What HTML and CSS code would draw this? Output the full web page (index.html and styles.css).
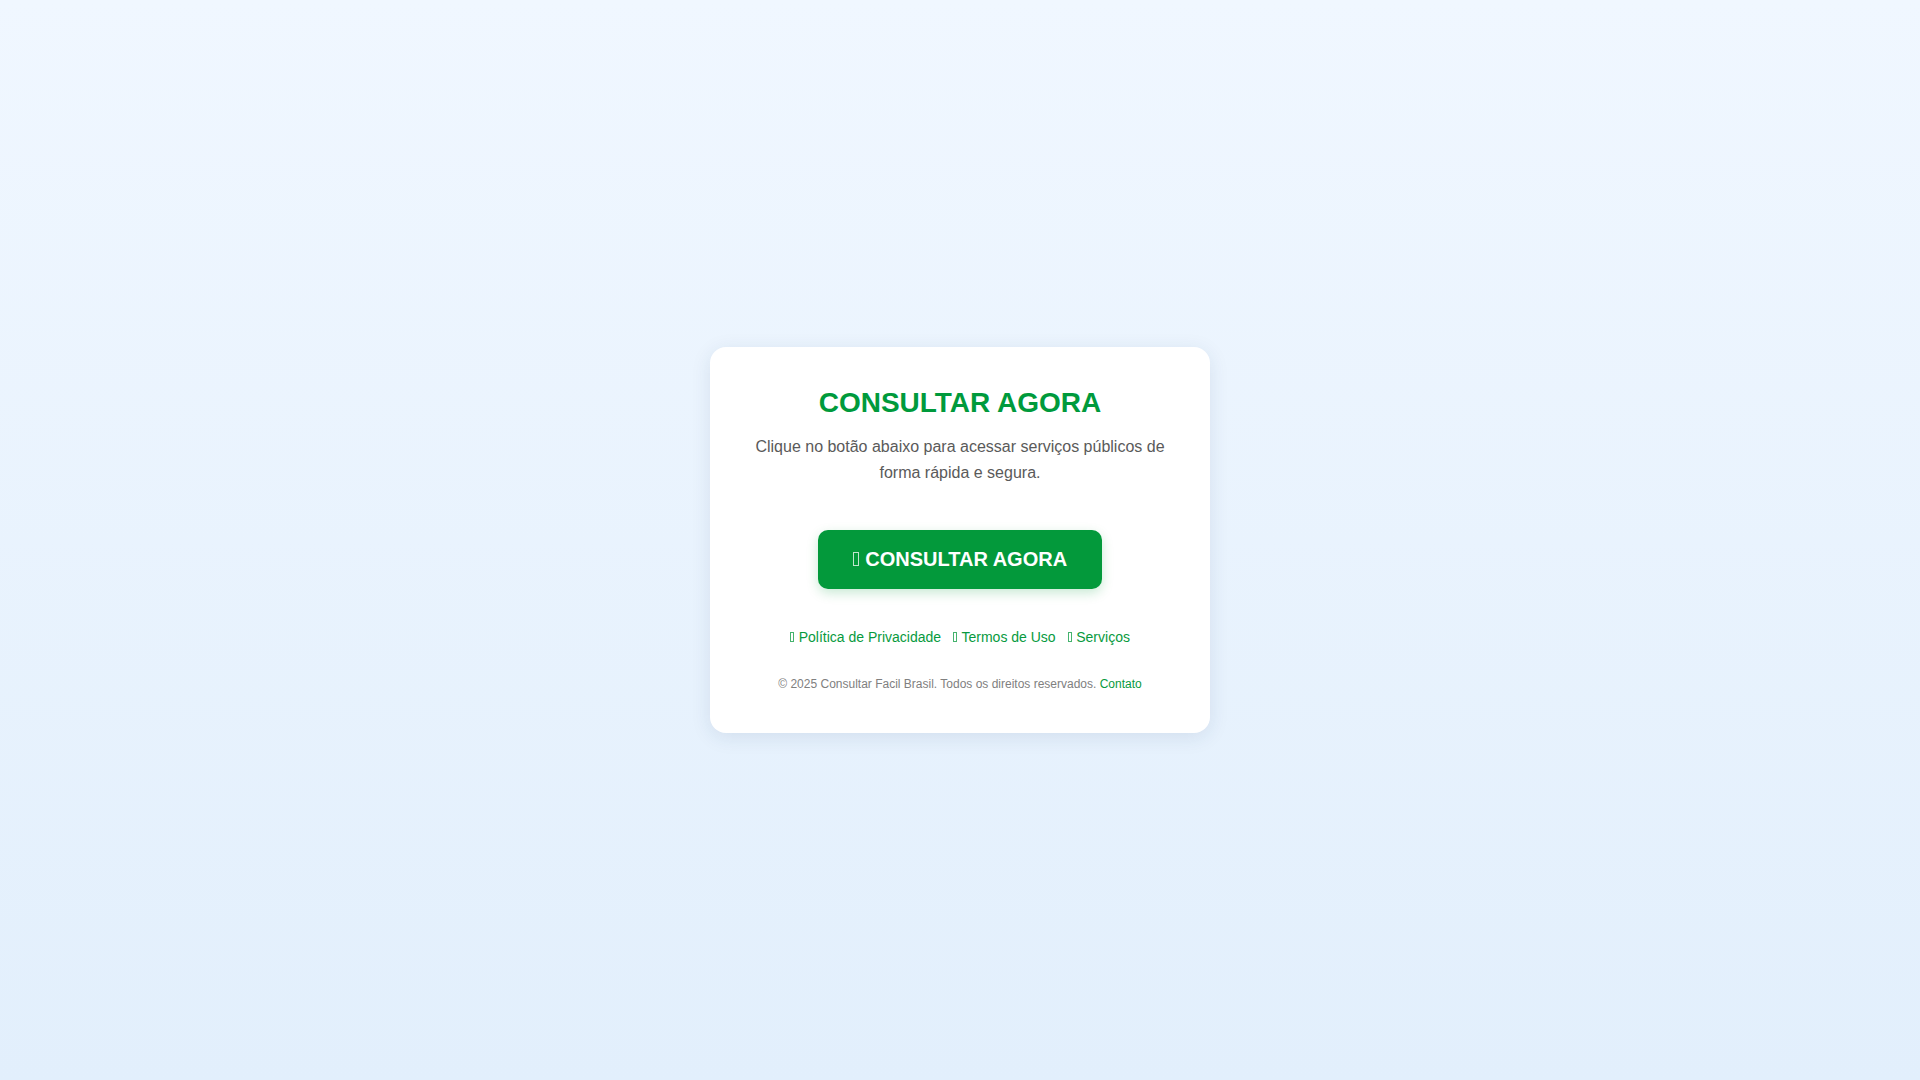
FILE: index.html
```html
<!DOCTYPE html>
<html lang="pt-BR">
<head>
<meta charset="utf-8">
<title>Consultar Agora</title>
<link rel="stylesheet" href="styles.css">
</head>
<body>
<main class="card">
  <h1 class="title">CONSULTAR AGORA</h1>
  <p class="lead">Clique no botão abaixo para acessar serviços públicos de forma rápida e segura.</p>
  <div class="action">
    <a class="btn" href="#"><span class="tofu"></span> CONSULTAR AGORA</a>
  </div>
  <nav class="links">
    <a href="#"><span class="tofu"></span> Política de Privacidade</a>
    <a href="#"><span class="tofu"></span> Termos de Uso</a>
    <a href="#"><span class="tofu"></span> Serviços</a>
  </nav>
  <footer class="foot">© 2025 Consultar Facil Brasil. Todos os direitos reservados. <a href="#">Contato</a></footer>
</main>
</body>
</html>
```
FILE: styles.css
```css
* { box-sizing: border-box; }
html, body { margin: 0; padding: 0; }
body {
  min-height: 100vh;
  display: flex;
  align-items: center;
  justify-content: center;
  font-family: "Liberation Sans", Arial, sans-serif;
  background: linear-gradient(to bottom, #f0f7ff 0%, #e2effc 100%);
  color: #555;
}
.card {
  width: 500px;
  background: #fff;
  border-radius: 16px;
  padding: 40px 40px 39px;
  text-align: center;
  box-shadow: 0 4px 20px rgba(30, 60, 100, 0.10);
}
.title {
  margin: 0 0 15px;
  font-size: 28px;
  line-height: 32px;
  font-weight: 700;
  color: #009a3c;
}
.lead {
  margin: 0;
  font-size: 16px;
  line-height: 26px;
  color: #5a5a5a;
}
.action {
  margin-top: 44px;
  display: flex;
  justify-content: center;
}
.btn {
  display: inline-block;
  background: #03993b;
  color: #fff;
  text-decoration: none;
  font-size: 20px;
  font-weight: 700;
  line-height: 23px;
  padding: 18px 35px 18px;
  border-radius: 10px;
  box-shadow: 0 4px 12px rgba(3, 153, 59, 0.22);
}
.tofu {
  display: inline-block;
  width: 0.3em;
  height: 0.68em;
  border: 1px solid currentColor;
  opacity: 0.75;
  margin-right: 0.04em;
}
.links {
  margin-top: 37px;
  display: flex;
  justify-content: center;
  gap: 12px;
  font-size: 14px;
  line-height: 22px;
}
.links a, .foot a {
  color: #079a3e;
  text-decoration: none;
}
.foot {
  margin-top: 27px;
  font-size: 12px;
  line-height: 19px;
  color: #808080;
}
```
